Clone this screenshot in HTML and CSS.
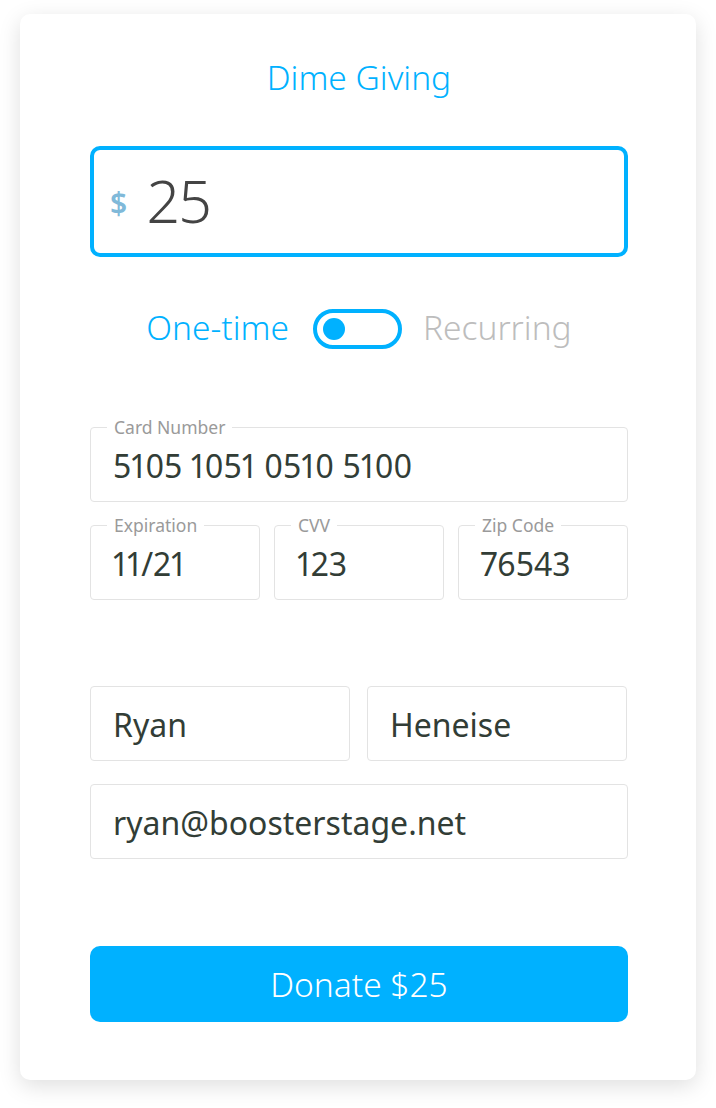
FILE: index.html
```html
<!DOCTYPE html>
<html lang="en">
<head>
<meta charset="utf-8">
<title>Dime Giving</title>
<link rel="stylesheet" href="styles.css">
</head>
<body>
<main class="card">
  <h1 class="title">Dime Giving</h1>

  <div class="amount">
    <span class="currency">$</span>
    <span class="amount-value">25</span>
  </div>

  <div class="frequency">
    <span class="freq-option freq-active">One-time</span>
    <span class="switch"><span class="knob"></span></span>
    <span class="freq-option freq-inactive">Recurring</span>
  </div>

  <div class="field field-card">
    <span class="field-label">Card Number</span>
    <span class="field-value">5105 1051 0510 5100</span>
  </div>

  <div class="row row-three">
    <div class="field">
      <span class="field-label">Expiration</span>
      <span class="field-value">11/21</span>
    </div>
    <div class="field">
      <span class="field-label">CVV</span>
      <span class="field-value">123</span>
    </div>
    <div class="field">
      <span class="field-label">Zip Code</span>
      <span class="field-value">76543</span>
    </div>
  </div>

  <div class="row row-two">
    <div class="field">
      <span class="field-value">Ryan</span>
    </div>
    <div class="field">
      <span class="field-value">Heneise</span>
    </div>
  </div>

  <div class="field field-email">
    <span class="field-value">ryan@boosterstage.net</span>
  </div>

  <button class="donate" type="button">Donate $25</button>
</main>
</body>
</html>
```

FILE: styles.css
```css
* {
  box-sizing: border-box;
}

html, body {
  margin: 0;
  padding: 0;
  background: #ffffff;
}

body {
  font-family: "Noto Sans", "Open Sans", sans-serif;
  font-variant-numeric: proportional-nums;
  width: 716px;
  height: 1108px;
  overflow: hidden;
}

.card {
  margin: 14px 20px 0 20px;
  width: 676px;
  height: 1066px;
  background: #ffffff;
  border-radius: 10px;
  box-shadow: 0 6px 22px rgba(0, 0, 0, 0.13);
  padding: 43px 68px 0 70px;
  display: flex;
  flex-direction: column;
}

.title {
  margin: 0;
  font-size: 33.5px;
  line-height: 40px;
  font-weight: 300;
  color: #00b1ff;
  text-align: center;
}

.amount {
  margin-top: 49px;
  height: 111px;
  border: 4px solid #00b1ff;
  border-radius: 10px;
  display: flex;
  align-items: center;
  padding-left: 16px;
  gap: 20px;
}

.currency {
  font-size: 30px;
  font-weight: 600;
  color: #80b9d9;
  line-height: 1;
  margin-top: 2px;
}

.amount-value {
  font-size: 59px;
  font-weight: 300;
  color: #444444;
  line-height: 1;
  margin-top: -2px;
}

.frequency {
  margin-top: 51px;
  height: 41px;
  display: flex;
  align-items: center;
  justify-content: center;
}

.freq-option {
  font-size: 33.5px;
  font-weight: 300;
  line-height: 41px;
  margin-top: -2px;
}

.freq-active {
  color: #00b1ff;
  margin-right: 24px;
}

.freq-inactive {
  color: #bdbdbd;
  margin-left: 21px;
}

.switch {
  width: 89px;
  height: 40px;
  border: 4px solid #00b1ff;
  border-radius: 20px;
  display: flex;
  align-items: center;
  padding-left: 6px;
}

.knob {
  width: 22px;
  height: 22px;
  border-radius: 50%;
  background: #00b1ff;
}

.field {
  position: relative;
  height: 75px;
  border: 1px solid #e3e3e3;
  border-radius: 4px;
  display: flex;
  align-items: center;
  padding-left: 22px;
}

.field-card {
  margin-top: 78px;
}

.field-label {
  position: absolute;
  top: -11px;
  left: 16px;
  padding: 0 7px;
  background: #ffffff;
  font-size: 17.5px;
  line-height: 20px;
  color: #9a9a9a;
}

.field-value {
  font-size: 32px;
  line-height: 40px;
  color: #323d36;
  margin-top: 2px;
}

.row {
  display: grid;
}

.row-three {
  margin-top: 23px;
  grid-template-columns: 170px 170px 170px;
  column-gap: 14px;
}

.row-two {
  margin-top: 86px;
  grid-template-columns: 260px 260px;
  column-gap: 17px;
}

.field-email {
  margin-top: 23px;
}

.donate {
  margin-top: 87px;
  height: 76px;
  width: 100%;
  border: none;
  border-radius: 10px;
  background: #00b1ff;
  color: #ffffff;
  font-family: "Noto Sans", "Open Sans", sans-serif;
  font-size: 33.5px;
  font-weight: 300;
  padding: 0;
  cursor: pointer;
}
```
